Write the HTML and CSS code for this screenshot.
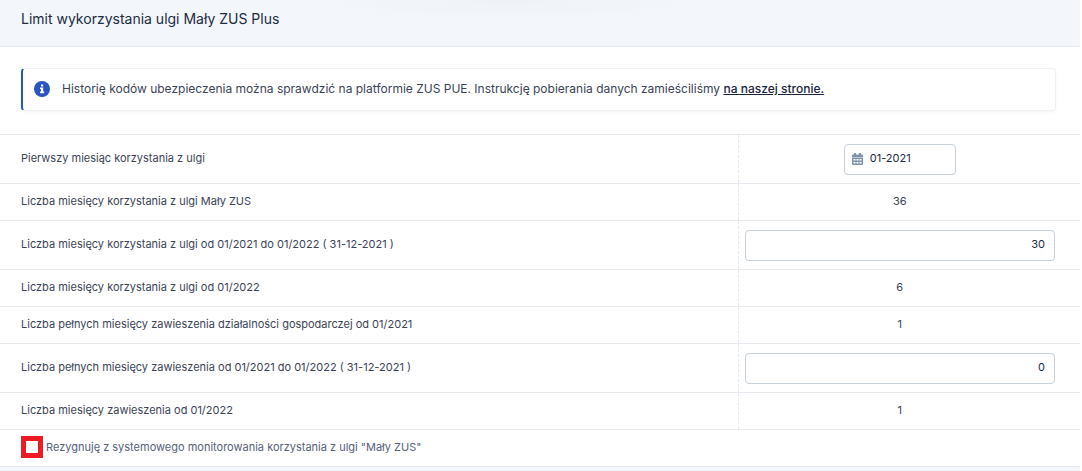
FILE: index.html
```html
<!DOCTYPE html>
<html lang="pl">
<head>
    <meta charset="UTF-8">
    <meta name="viewport" content="width=device-width, initial-scale=1.0">
    <title>Limit wykorzystania ulgi Mały ZUS Plus</title>
    <link rel="stylesheet" href="styles.css">
</head>
<body>
    <header class="header">
        <h1>Limit wykorzystania ulgi Mały ZUS Plus</h1>
    </header>

    <main class="content">
        <div class="info">
            <svg class="info-icon" viewBox="0 0 16 16" aria-hidden="true">
                <circle cx="8" cy="8" r="8" fill="#2855c0"/>
                <path d="M7 3.500h2.200v2H7zM6 6.600h3.200v4h1v1.600H6v-1.600h1V8.200H6z" fill="#fff"/>
            </svg>
            <p>Historię kodów ubezpieczenia można sprawdzić na platformie ZUS PUE. Instrukcję pobierania danych zamieściliśmy <a href="#">na naszej stronie.</a></p>
        </div>

        <table class="limits">
            <tr class="tall">
                <th scope="row"><label for="firstMonth">Pierwszy miesiąc korzystania z ulgi</label></th>
                <td class="field-cell">
                    <div class="date-field">
                        <svg class="calendar-icon" viewBox="0 0 11 12" aria-hidden="true">
                            <path d="M2 0h2v1.500h3V0h2v1.500h1a1 1 0 0 1 1 1V4H0V2.500a1 1 0 0 1 1-1h1z"/>
                            <path fill-rule="evenodd" d="M0 4.600h11V11a1 1 0 0 1-1 1H1a1 1 0 0 1-1-1zM1.500 6v1.500h2V6zM4.500 6v1.500h2V6zM7.500 6v1.500h2V6zM1.500 9v1.500h2V9zM4.500 9v1.500h2V9zM7.500 9v1.500h2V9z"/>
                        </svg>
                        <input type="text" id="firstMonth" value="01-2021">
                    </div>
                </td>
            </tr>
            <tr>
                <th scope="row">Liczba miesięcy korzystania z ulgi Mały ZUS</th>
                <td>36</td>
            </tr>
            <tr class="tall">
                <th scope="row"><label for="monthsUsed">Liczba miesięcy korzystania z ulgi od 01/2021 do 01/2022 ( 31-12-2021 )</label></th>
                <td class="field-cell"><input class="number-field" type="text" id="monthsUsed" value="30"></td>
            </tr>
            <tr>
                <th scope="row">Liczba miesięcy korzystania z ulgi od 01/2022</th>
                <td>6</td>
            </tr>
            <tr>
                <th scope="row">Liczba pełnych miesięcy zawieszenia działalności gospodarczej od 01/2021</th>
                <td>1</td>
            </tr>
            <tr class="tall">
                <th scope="row"><label for="monthsSuspended">Liczba pełnych miesięcy zawieszenia od 01/2021 do 01/2022 ( 31-12-2021 )</label></th>
                <td class="field-cell"><input class="number-field" type="text" id="monthsSuspended" value="0"></td>
            </tr>
            <tr>
                <th scope="row">Liczba miesięcy zawieszenia od 01/2022</th>
                <td>1</td>
            </tr>
        </table>

        <div class="opt-out">
            <input type="checkbox" id="optOut">
            <label for="optOut">Rezygnuję z systemowego monitorowania korzystania z ulgi "Mały ZUS"</label>
        </div>
    </main>
</body>
</html>
```

FILE: styles.css
```css
* {
    box-sizing: border-box;
}
body {
    margin: 0;
    padding-right: 2px;
    min-height: 100vh;
    background: linear-gradient(#f3f7fb, #f3f7fb) no-repeat;
    background-size: calc(100% - 2px) 100%;
    font-family: Inter, "Noto Sans", sans-serif;
    font-size: 11px;
    line-height: 16px;
    color: #3b4456;
}
.header {
    padding: 9px 21px 17px;
    border-bottom: 1px solid #e3e9ee;
    background: radial-gradient(ellipse 180px 20px at 47% 0, #eef2f6, #f3f7fb) no-repeat;
}
.header h1 {
    margin: 0;
    font-size: 14px;
    line-height: 20px;
    font-weight: 400;
    color: #212b3f;
}
.content {
    padding-top: 21px;
    background-color: #fff;
}
.info {
    display: flex;
    align-items: center;
    gap: 12px;
    margin: 0 24px 23px 21px;
    padding: 11px 11px 12px;
    border: 1px solid #f0f1f3;
    border-left: 2px solid #2855c0;
    border-radius: 4px;
    box-shadow: 0 2px 4px rgba(0, 0, 0, 0.03);
}
.info-icon {
    flex: none;
    width: 16px;
    height: 16px;
}
.info p {
    margin: 0;
    font-size: 12px;
    line-height: 18px;
}
.info a {
    color: #1c2540;
    font-weight: 500;
}

/* Table */
.limits {
    width: 100%;
    border-collapse: collapse;
    table-layout: fixed;
    border-top: 1px solid #e6e9f0;
}
.limits tr {
    height: 37px;
    border-bottom: 1px solid #e6e9f0;
}
.limits .tall {
    height: 49px;
}
.limits th {
    padding: 0 21px 2px;
    font-weight: 400;
    text-align: left;
}
.limits td {
    width: 342px;
    padding: 0 25px 2px 6px;
    border-left: 1px dashed #e6e9f0;
    text-align: center;
}
.limits .field-cell {
    padding-bottom: 0;
}

/* Fields */
.date-field,
.number-field {
    height: 31px;
    border: 1px solid #c6d0da;
    border-radius: 4px;
    background-color: #fff;
}
.date-field {
    display: flex;
    align-items: center;
    gap: 7px;
    width: 112px;
    margin: 0 auto;
    padding: 0 7px;
}
.date-field input {
    width: 100%;
    min-width: 0;
    padding: 0 0 2px;
    border: 0;
    outline: 0;
    font: inherit;
    color: #212b3f;
}
.calendar-icon {
    flex: none;
    width: 11px;
    height: 12px;
    fill: #7e93a8;
}
.number-field {
    display: block;
    width: 100%;
    padding: 0 9px 2px;
    font: inherit;
    color: #212b3f;
    text-align: right;
}

.opt-out {
    display: flex;
    align-items: center;
    gap: 3px;
    height: 37px;
    padding: 0 21px 3px;
    border-bottom: 1px solid #e3e9ee;
    color: #56617a;
}
.opt-out input {
    appearance: none;
    width: 22px;
    height: 22px;
    margin: 0;
    border: 5px solid #ed1c24;
    background-color: #fff;
}
```
